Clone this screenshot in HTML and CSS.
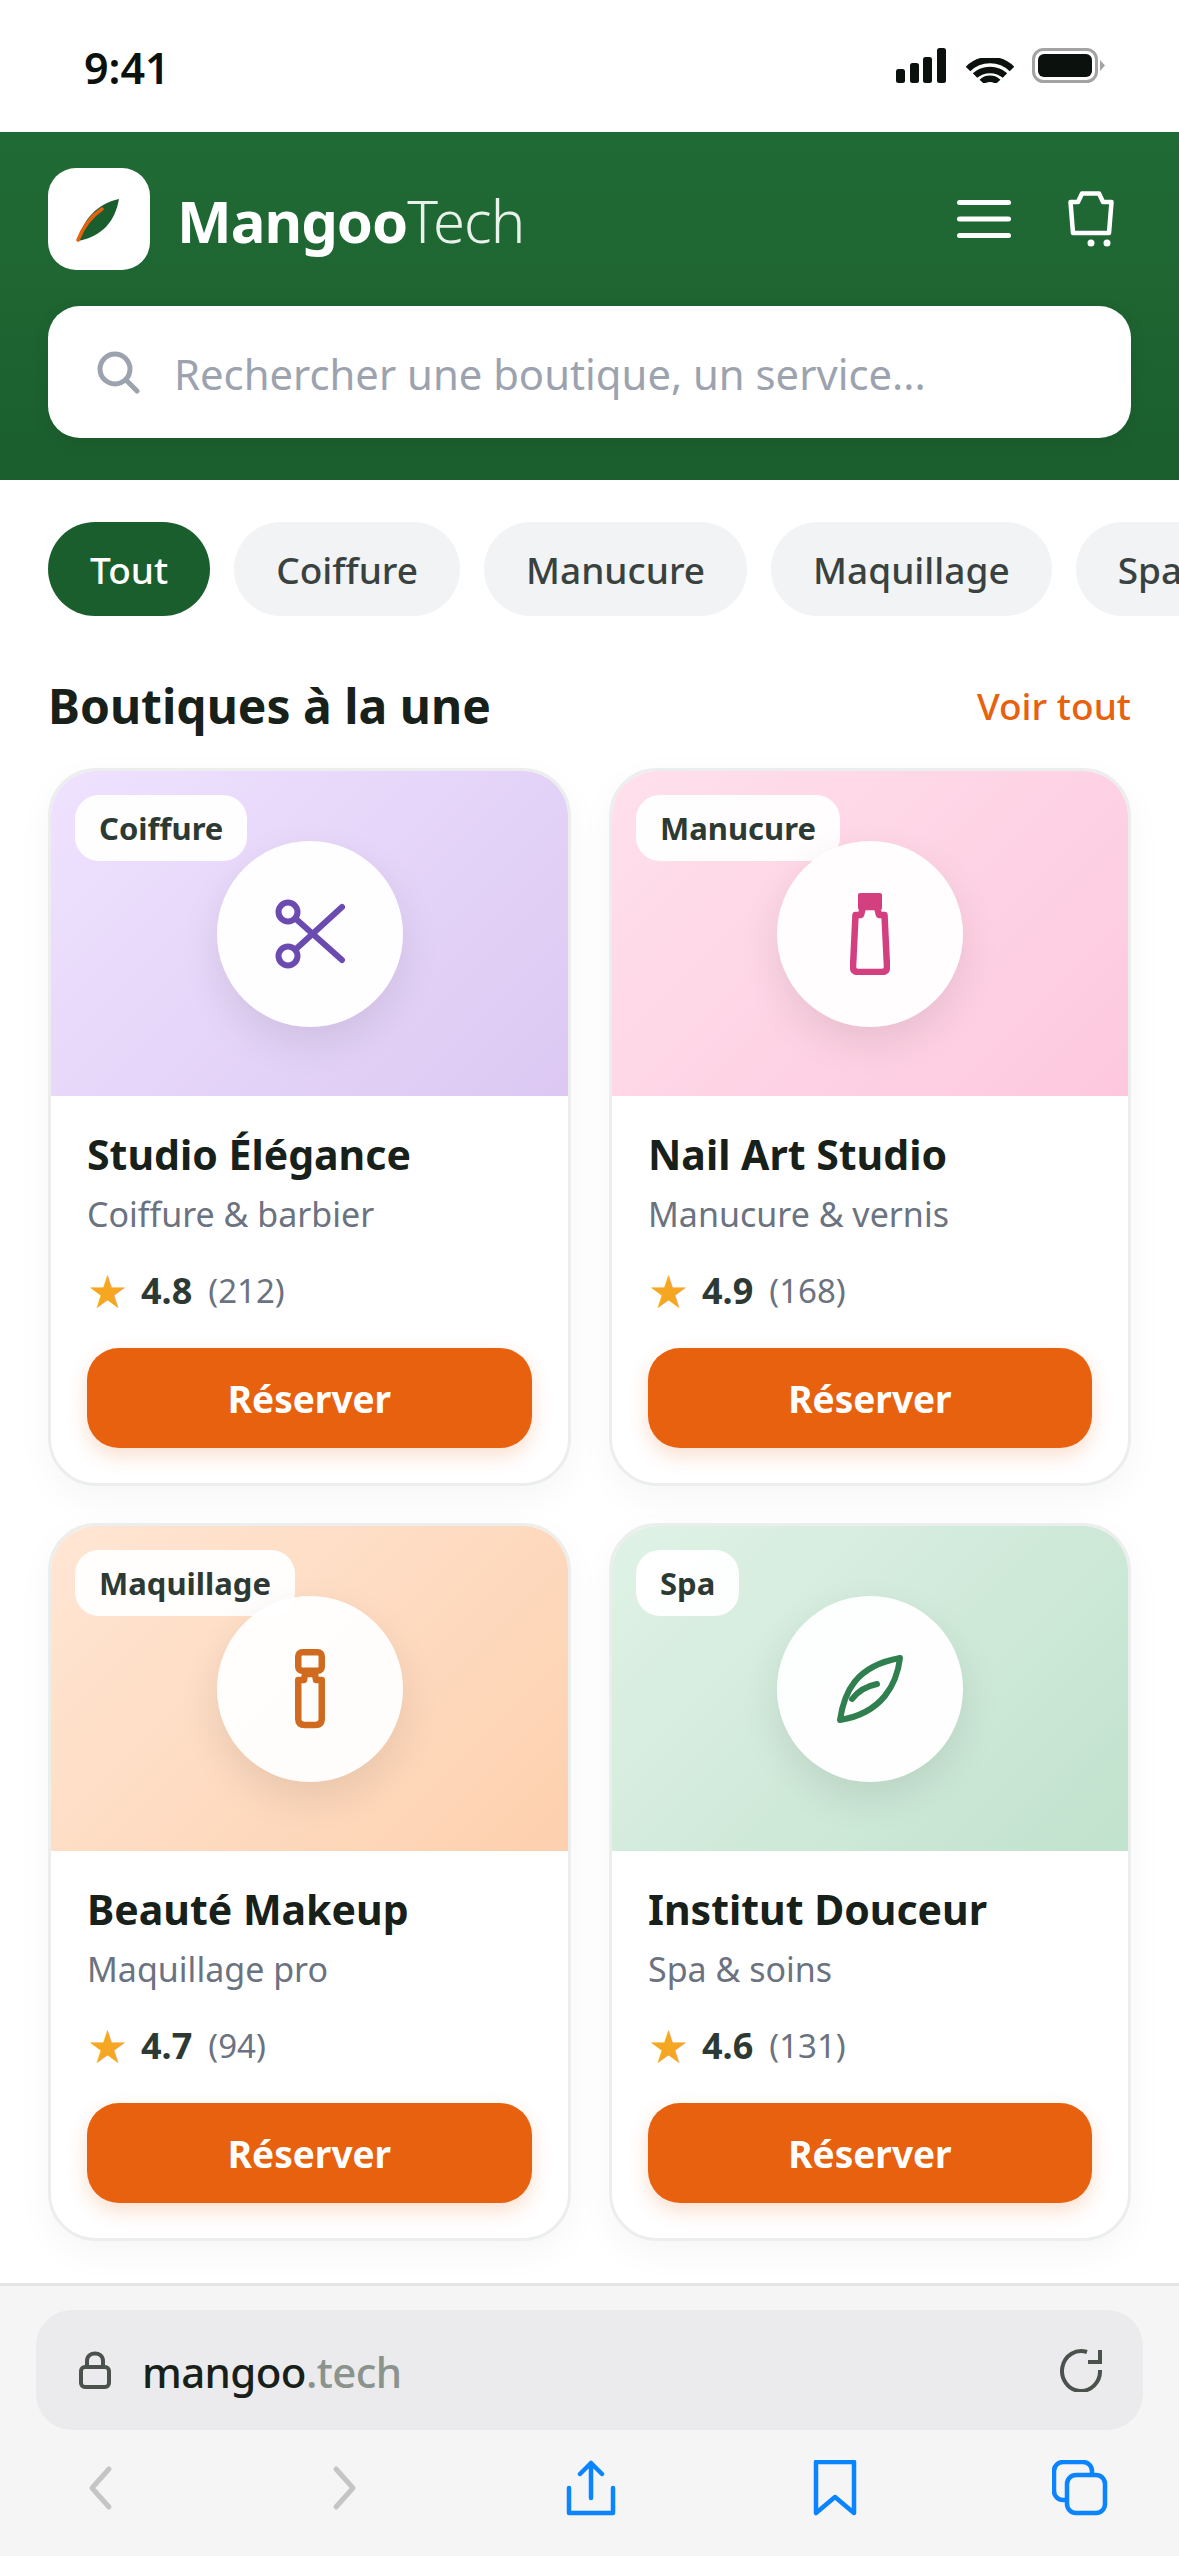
FILE: index.html
```html
<!DOCTYPE html>
<html lang="fr">
<head>
  <meta charset="UTF-8" />
  <meta name="viewport" content="width=device-width, initial-scale=1" />
  <title>MangooTech</title>
  <link rel="stylesheet" href="styles.css">
</head>
<body>

  <div class="status-bar">
    <span class="time">9:41</span>
    <div class="status-icons">
      <svg width="50" height="35" viewBox="0 0 50 35" fill="#0b120d">
        <rect x="0" y="21" width="9" height="14" rx="2.5"/>
        <rect x="14" y="15" width="9" height="20" rx="2.5"/>
        <rect x="27" y="9" width="9" height="26" rx="2.5"/>
        <rect x="41" y="0" width="9" height="35" rx="2.5"/>
      </svg>
      <svg class="wifi" width="48" height="25" viewBox="0 0 48 25" fill="none" stroke="#0b120d" stroke-width="6.5">
        <path d="M2 11C14-1 34-1 46 11"/>
        <path d="M9 17.500C17 10 31 10 39 17.500"/>
        <path d="M16 24C20 19.500 28 19.500 32 24"/>
      </svg>
      <svg width="74" height="35" viewBox="0 0 74 35">
        <rect x="1.5" y="1.5" width="63" height="32" rx="10" fill="none" stroke="#a3a3a3" stroke-width="3"/>
        <rect x="6" y="6" width="54" height="23" rx="6" fill="#0b120d"/>
        <path d="M68 12l5 5.500-5 5.500z" fill="#a3a3a3"/>
      </svg>
    </div>
  </div>

  <header class="top">
    <div class="top-row">
      <div class="logo">
        <svg width="60" height="60" viewBox="0 0 60 60">
          <path d="M9 52C14 30 28 15 50 10C46 32 34 47 9 52Z" fill="#1b5e2e"/>
          <path d="M9 51C14 38 21 28 33 20" fill="none" stroke="#e8610e" stroke-width="3.500" stroke-linecap="round"/>
        </svg>
      </div>
      <div class="brand">Mangoo<span>Tech</span></div>
      <div class="top-icons">
        <svg width="54" height="38" viewBox="0 0 54 38" fill="#fff">
          <rect y="0" width="54" height="5" rx="2.5"/>
          <rect y="16.500" width="54" height="5" rx="2.500"/>
          <rect y="33" width="54" height="5" rx="2.500"/>
        </svg>
        <svg width="46" height="56" viewBox="0 0 46 56" fill="none" stroke="#fff" stroke-width="4.500" stroke-linejoin="round">
          <path d="M2.500 11H10L14 2.500H31L35 11H43.500L41 42H5Z"/>
          <circle cx="23" cy="52" r="3.500" fill="#fff" stroke="none"/>
          <circle cx="39" cy="52" r="3.500" fill="#fff" stroke="none"/>
        </svg>
      </div>
    </div>
    <div class="search">
      <svg width="44" height="44" viewBox="0 0 44 44" fill="none" stroke="#9ca3af" stroke-width="5" stroke-linecap="round">
        <circle cx="19" cy="19" r="15"/>
        <path d="M30 30l11 11"/>
      </svg>
      <span>Rechercher une boutique, un service...</span>
    </div>
  </header>

  <main class="content">
    <nav class="chips">
      <span class="chip active">Tout</span>
      <span class="chip">Coiffure</span>
      <span class="chip">Manucure</span>
      <span class="chip">Maquillage</span>
      <span class="chip">Spa</span>
    </nav>

    <div class="section-head">
      <h2>Boutiques à la une</h2>
      <a class="see-all">Voir tout</a>
    </div>

    <div class="grid">
      <article class="card">
        <div class="thumb purple">
          <span class="badge">Coiffure</span>
          <div class="round">
            <svg width="70" height="70" viewBox="0 0 70 70" fill="none" stroke="#6b4bb0" stroke-width="6" stroke-linecap="round">
              <circle cx="13" cy="13" r="9.500"/>
              <circle cx="13" cy="57" r="9.500"/>
              <path d="M21 20L67 61"/>
              <path d="M21 50L67 8"/>
            </svg>
          </div>
        </div>
        <div class="card-body">
          <h3>Studio Élégance</h3>
          <p class="kind">Coiffure &amp; barbier</p>
          <div class="rating"><span class="star">★</span><b>4.8</b><span class="count">(212)</span></div>
          <button class="book">Réserver</button>
        </div>
      </article>

      <article class="card">
        <div class="thumb pink">
          <span class="badge">Manucure</span>
          <div class="round">
            <svg width="40" height="82" viewBox="0 0 40 82" fill="none" stroke="#d43f80" stroke-width="6.500" stroke-linejoin="round">
              <rect x="8" y="0" width="24" height="17" rx="2" fill="#d43f80" stroke="none"/>
              <path d="M5.500 22H11L13 14H27L29 22H34.500L37 74Q37 79 32 79H8Q3 79 3 74Z"/>
            </svg>
          </div>
        </div>
        <div class="card-body">
          <h3>Nail Art Studio</h3>
          <p class="kind">Manucure &amp; vernis</p>
          <div class="rating"><span class="star">★</span><b>4.9</b><span class="count">(168)</span></div>
          <button class="book">Réserver</button>
        </div>
      </article>

      <article class="card">
        <div class="thumb peach">
          <span class="badge">Maquillage</span>
          <div class="round">
            <svg width="30" height="80" viewBox="0 0 30 80" fill="none" stroke="#cf6a1f" stroke-width="6.500" stroke-linejoin="round">
              <rect x="3.250" y="3.250" width="23.500" height="18.500" rx="4"/>
              <path d="M3.250 31H9L10 25H20L21 31H26.750V70Q26.750 76 20 76H10Q3.250 76 3.250 70Z"/>
            </svg>
          </div>
        </div>
        <div class="card-body">
          <h3>Beauté Makeup</h3>
          <p class="kind">Maquillage pro</p>
          <div class="rating"><span class="star">★</span><b>4.7</b><span class="count">(94)</span></div>
          <button class="book">Réserver</button>
        </div>
      </article>

      <article class="card">
        <div class="thumb mint">
          <span class="badge">Spa</span>
          <div class="round">
            <svg width="66" height="68" viewBox="0 0 66 68" fill="none" stroke="#2f7f4f" stroke-width="6" stroke-linecap="round" stroke-linejoin="round">
              <path d="M3 65C7 38 18 11 63 3C60 28 46 58 3 65Z"/>
              <path d="M15 44C22 35 30 31 40 29"/>
            </svg>
          </div>
        </div>
        <div class="card-body">
          <h3>Institut Douceur</h3>
          <p class="kind">Spa &amp; soins</p>
          <div class="rating"><span class="star">★</span><b>4.6</b><span class="count">(131)</span></div>
          <button class="book">Réserver</button>
        </div>
      </article>
    </div>
  </main>

  <footer class="browser">
    <div class="url-bar">
      <svg width="32" height="38" viewBox="0 0 32 38" fill="none" stroke="#4b524d" stroke-width="4">
        <rect x="2" y="16" width="28" height="20" rx="4"/>
        <path d="M8 16V10C8 0 24 0 24 10V16"/>
      </svg>
      <span class="url">mangoo<span>.tech</span></span>
      <svg class="reload" width="44" height="44" viewBox="0 0 44 44" fill="none" stroke="#4b524d" stroke-width="4">
        <path d="M41 22A19 20 0 1 1 28 4"/>
        <path d="M41 2V14H29"/>
      </svg>
    </div>
    <div class="tools">
      <svg width="56" height="56" viewBox="0 0 56 56" fill="none" stroke="#c4c6c4" stroke-width="5" stroke-linecap="round" stroke-linejoin="round"><path d="M37 9L20 28L37 47"/></svg>
      <svg width="56" height="56" viewBox="0 0 56 56" fill="none" stroke="#c4c6c4" stroke-width="5" stroke-linecap="round" stroke-linejoin="round"><path d="M19 9L36 28L19 47"/></svg>
      <svg width="56" height="56" viewBox="0 0 56 56" fill="none" stroke="#0a84ff" stroke-width="4.500" stroke-linecap="round" stroke-linejoin="round"><path d="M29 38V3M18 14L29 3L40 14"/><path d="M7 28V53H51V28"/></svg>
      <svg width="56" height="56" viewBox="0 0 56 56" fill="none" stroke="#0a84ff" stroke-width="4.500" stroke-linejoin="round"><path d="M9 2H47V53L28 37L9 53Z"/></svg>
      <svg width="56" height="56" viewBox="0 0 56 56" fill="none" stroke="#0a84ff" stroke-width="4.500" stroke-linejoin="round"><rect x="2" y="2" width="38" height="38" rx="9"/><rect x="15" y="15" width="38" height="38" rx="9" fill="#f5f5f5"/></svg>
    </div>
  </footer>

</body>
</html>
```

FILE: styles.css
```css
* {
  box-sizing: border-box;
}
body {
  margin: 0;
  width: 1179px;
  height: 2556px;
  overflow: hidden;
  display: flex;
  flex-direction: column;
  font-family: "Noto Sans", sans-serif;
  background: #fff;
  color: #18201a;
}
.status-bar {
  height: 132px;
  display: flex;
  justify-content: space-between;
  padding: 46px 73px 0 84px;
}
.time {
  font-size: 43px;
  line-height: 44px;
  font-weight: 600;
  color: #0b120d;
}
.status-icons {
  display: flex;
  align-items: flex-end;
  height: 35px;
  margin-top: 2px;
  gap: 19px;
}
.status-icons .wifi {
  margin-left: 1px;
  margin-right: -1px;
}
.top {
  height: 348px;
  padding: 36px 48px 0;
  background: linear-gradient(180deg, #206b35, #1b5e2e);
}
.top-row {
  display: flex;
  align-items: center;
  height: 102px;
}
.logo {
  width: 102px;
  height: 102px;
  border-radius: 28px;
  background: #fff;
  display: flex;
  align-items: center;
  justify-content: center;
}
.brand {
  margin-left: 27px;
  padding-top: 3px;
  font-size: 58px;
  font-weight: 700;
  color: #fff;
  letter-spacing: -1px;
}
.brand span {
  font-weight: 300;
  color: #e8f1ea;
}
.top-icons {
  margin-left: auto;
  display: flex;
  align-items: center;
  gap: 57px;
  padding-right: 17px;
}
.search {
  margin-top: 36px;
  height: 132px;
  border-radius: 32px;
  background: #fff;
  display: flex;
  align-items: center;
  gap: 34px;
  padding: 0 48px;
  font-size: 41.800px;
  color: #9ca3af;
  box-shadow: 0 6px 18px rgba(0, 0, 0, 0.08);
}
.search span {
  padding-top: 2px;
}
.content {
  flex: 1;
  overflow: hidden;
}
.chips {
  display: flex;
  gap: 24px;
  padding: 42px 0 0 48px;
  white-space: nowrap;
}
.chip {
  height: 94px;
  line-height: 96px;
  padding: 0 42px;
  border-radius: 47px;
  background: #f1f3f4;
  font-size: 37px;
  font-weight: 500;
  color: #3a4240;
}
.chip.active {
  background: #1b5e2e;
  color: #fff;
}
.section-head {
  display: flex;
  justify-content: space-between;
  align-items: center;
  padding: 0 48px;
  margin-top: 57px;
  height: 64px;
}
.section-head h2 {
  margin: 0;
  font-size: 48px;
  font-weight: 700;
  color: #18201a;
}
.see-all {
  font-size: 37px;
  font-weight: 500;
  color: #e8610e;
}
.grid {
  display: grid;
  grid-template-columns: 523px 522px;
  gap: 37px 38px;
  padding: 0 48px;
  margin-top: 31px;
}
.card {
  height: 718px;
  border: 3px solid #eceeee;
  border-radius: 48px;
  background: #fff;
  overflow: hidden;
  box-shadow: 0 12px 36px rgba(0, 0, 0, 0.04);
}
.thumb {
  position: relative;
  height: 325px;
  display: flex;
  align-items: center;
  justify-content: center;
}
.purple { background: linear-gradient(135deg, #efe2ff, #dcc8f2); }
.pink { background: linear-gradient(135deg, #ffe0ec, #fdc8de); }
.peach { background: linear-gradient(135deg, #ffe6d4, #fdd0ae); }
.mint { background: linear-gradient(135deg, #e0f2e7, #c1e2cd); }
.badge {
  position: absolute;
  top: 24px;
  left: 24px;
  height: 66px;
  line-height: 66px;
  padding: 0 24px;
  border-radius: 24px;
  background: rgba(255, 255, 255, 0.95);
  font-size: 31px;
  font-weight: 700;
  color: #2d3a34;
}
.round {
  position: relative;
  width: 186px;
  height: 186px;
  border-radius: 50%;
  background: rgba(255, 255, 255, 0.95);
  display: flex;
  align-items: center;
  justify-content: center;
  box-shadow: 0 16px 40px rgba(0, 0, 0, 0.09);
}
.card-body {
  padding: 30px 36px 0;
}
.card-body h3 {
  margin: 0;
  font-size: 41px;
  line-height: 56px;
  font-weight: 700;
  color: #18201a;
}
.kind {
  margin: 8px 0 0;
  font-size: 34px;
  line-height: 48px;
  color: #6b7280;
}
.rating {
  display: flex;
  align-items: center;
  margin-top: 28px;
  height: 48px;
}
.star {
  font-size: 46px;
  line-height: 48px;
  color: #f5a623;
  width: 54px;
}
.rating b {
  font-size: 36px;
  font-weight: 700;
  color: #2d3a34;
}
.count {
  margin-left: 16px;
  font-size: 33px;
  color: #6b7280;
}
.book {
  display: block;
  width: 100%;
  height: 100px;
  margin-top: 34px;
  border: none;
  border-radius: 32px;
  background: #e8610e;
  color: #fff;
  font-family: inherit;
  font-size: 37px;
  font-weight: 700;
  box-shadow: 0 8px 20px rgba(232, 97, 14, 0.2);
}
.browser {
  height: 273px;
  border-top: 3px solid #e5e5e5;
  background: #f5f5f5;
}
.url-bar {
  height: 120px;
  margin: 24px 36px 0;
  border-radius: 36px;
  background: #ebebed;
  display: flex;
  align-items: center;
  padding: 0 40px 0 43px;
}
.url {
  margin-left: 31px;
  padding-top: 3px;
  font-size: 42px;
  letter-spacing: -0.6px;
  font-weight: 500;
  color: #18201a;
}
.url span {
  color: #8a938c;
}
.reload {
  margin-left: auto;
}
.tools {
  display: flex;
  justify-content: space-between;
  padding: 0 71px 0 72px;
  margin-top: 30px;
}
```
